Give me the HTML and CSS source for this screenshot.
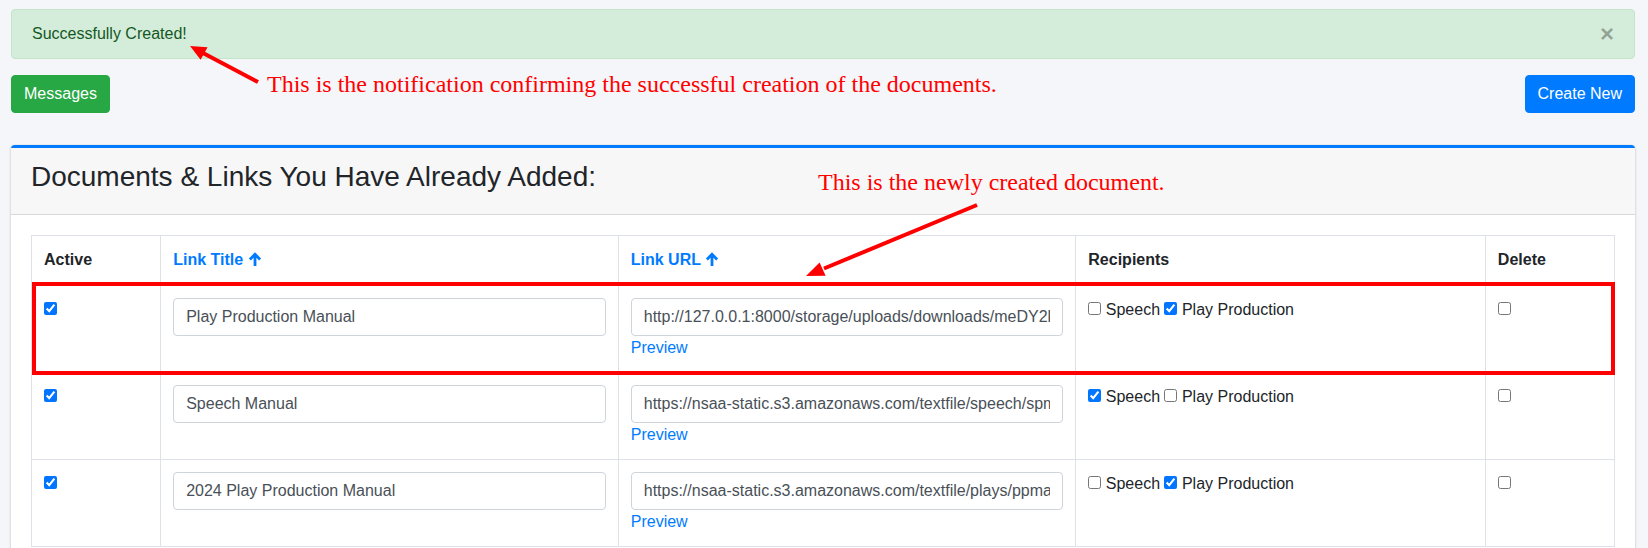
FILE: index.html
```html
<!DOCTYPE html>
<html lang="en">
<head>
<meta charset="utf-8">
<title>Documents &amp; Links</title>
<link rel="stylesheet" href="styles.css">
</head>
<body>
<div class="page">
  <div class="alert">
    Successfully Created!
    <button class="close" type="button">&times;</button>
  </div>

  <div class="toolbar">
    <button class="btn btn-success" type="button">Messages</button>
    <button class="btn btn-primary" type="button">Create New</button>
  </div>

  <div class="card">
    <div class="card-header">
      <h3 class="card-title">Documents &amp; Links You Have Already Added:</h3>
    </div>
    <div class="card-body">
      <table class="table">
        <colgroup>
          <col class="col-active">
          <col class="col-title">
          <col class="col-url">
          <col class="col-recipients">
          <col class="col-delete">
        </colgroup>
        <thead>
          <tr>
            <th>Active</th>
            <th><a class="sort" href="#">Link Title <svg class="sort-icon" viewBox="0 0 14 14" width="14" height="14"><path d="M7 14V2.4M1.9 7.4L7 2.3 12.1 7.4" fill="none" stroke="currentColor" stroke-width="2.8"/></svg></a></th>
            <th><a class="sort" href="#">Link URL <svg class="sort-icon" viewBox="0 0 14 14" width="14" height="14"><path d="M7 14V2.4M1.9 7.4L7 2.3 12.1 7.4" fill="none" stroke="currentColor" stroke-width="2.8"/></svg></a></th>
            <th>Recipients</th>
            <th>Delete</th>
          </tr>
        </thead>
        <tbody>
          <tr>
            <td><input type="checkbox" checked></td>
            <td><input class="form-control" type="text" value="Play Production Manual"></td>
            <td><input class="form-control" type="text" value="http://127.0.0.1:8000/storage/uploads/downloads/meDY2kP0aXq.pdf"><a class="preview" href="#">Preview</a></td>
            <td><input type="checkbox"> Speech <input type="checkbox" checked> Play Production</td>
            <td><input type="checkbox"></td>
          </tr>
          <tr>
            <td><input type="checkbox" checked></td>
            <td><input class="form-control" type="text" value="Speech Manual"></td>
            <td><input class="form-control" type="text" value="https://nsaa-static.s3.amazonaws.com/textfile/speech/spmanual.pdf"><a class="preview" href="#">Preview</a></td>
            <td><input type="checkbox" checked> Speech <input type="checkbox"> Play Production</td>
            <td><input type="checkbox"></td>
          </tr>
          <tr>
            <td><input type="checkbox" checked></td>
            <td><input class="form-control" type="text" value="2024 Play Production Manual"></td>
            <td><input class="form-control" type="text" value="https://nsaa-static.s3.amazonaws.com/textfile/plays/ppmanual.pdf"><a class="preview" href="#">Preview</a></td>
            <td><input type="checkbox"> Speech <input type="checkbox" checked> Play Production</td>
            <td><input type="checkbox"></td>
          </tr>
        </tbody>
      </table>
    </div>
  </div>

  <div class="annotations">
    <p class="note note-alert">This is the notification confirming the successful creation of the documents.</p>
    <p class="note note-row">This is the newly created document.</p>
    <svg class="marks" width="1648" height="548" viewBox="0 0 1648 548">
      <line x1="258" y1="82" x2="203" y2="53" stroke="#ff0000" stroke-width="4"/>
      <polygon points="190,46 207.6,47.2 200.6,59.8" fill="#ff0000"/>
      <line x1="977" y1="205" x2="824" y2="268.5" stroke="#ff0000" stroke-width="4"/>
      <polygon points="806,276 819.6,262.4 825.6,275.8" fill="#ff0000"/>
      <rect x="34" y="284" width="1579" height="89" fill="none" stroke="#ff0000" stroke-width="4"/>
    </svg>
  </div>
</div>
</body>
</html>
```

FILE: styles.css
```css
html, body {
  margin: 0;
  height: 100%;
  overflow: hidden;
}

body {
  background: #f4f6f9;
  font-family: "Liberation Sans", Arial, sans-serif;
  font-size: 16px;
  line-height: 1.5;
  color: #212529;
}

*, *::before, *::after {
  box-sizing: border-box;
}

.page {
  position: relative;
  padding: 9px 13px 0 11px;
  min-height: 100%;
}

/* Alert */
.alert {
  position: relative;
  padding: 12px 64px 12px 20px;
  margin-bottom: 16px;
  background: #d4edda;
  border: 1px solid #c3e6cb;
  border-radius: 4px;
  color: #155724;
}

.close {
  position: absolute;
  top: 0;
  right: 0;
  padding: 12px 20px;
  background: transparent;
  border: 0;
  font-family: inherit;
  font-size: 24px;
  font-weight: 700;
  line-height: 1;
  color: #000;
  opacity: .3;
  text-shadow: 0 1px 0 #fff;
}

/* Toolbar */
.toolbar {
  display: flex;
  justify-content: space-between;
  align-items: flex-start;
}

.btn {
  display: inline-block;
  padding: 6px 12px;
  font-family: inherit;
  font-size: 16px;
  line-height: 1.5;
  border: 1px solid transparent;
  border-radius: 4px;
  color: #fff;
}

.btn-success {
  background: #28a745;
  border-color: #28a745;
}

.btn-primary {
  background: #007bff;
  border-color: #007bff;
}

/* Card */
.card {
  margin-top: 32px;
  background: #fff;
  border-top: 3px solid #007bff;
  border-radius: 4px;
  box-shadow: 0 0 1px rgba(0, 0, 0, .125), 0 1px 3px rgba(0, 0, 0, .2);
}

.card-header {
  padding: 12px 20px;
  background: #f7f7f7;
  border-bottom: 1px solid rgba(0, 0, 0, .125);
}

.card-title {
  margin: 0 0 8px;
  font-size: 28px;
  font-weight: 500;
  line-height: 1.2;
  color: #212529;
}

.card-body {
  padding: 20px;
}

/* Table */
.table {
  width: 100%;
  border-collapse: collapse;
  table-layout: fixed;
  border: 1px solid #dee2e6;
}

.col-active { width: 129px; }
.col-title { width: 457px; }
.col-url { width: 457px; }
.col-recipients { width: 409px; }
.col-delete { width: 129px; }

.table th,
.table td {
  padding: 12px;
  border: 1px solid #dee2e6;
  vertical-align: top;
  text-align: left;
}

.table thead th {
  vertical-align: bottom;
  border-bottom-width: 2px;
  font-weight: 700;
}

.sort {
  color: #007bff;
  text-decoration: none;
}

.sort-icon {
  vertical-align: -1px;
}

.table input[type="checkbox"] {
  margin: 0;
}

.form-control {
  display: block;
  width: 100%;
  height: 38px;
  padding: 6px 12px;
  font-family: inherit;
  font-size: 16px;
  line-height: 1.5;
  color: #495057;
  background: #fff;
  border: 1px solid #ced4da;
  border-radius: 4px;
}

.preview {
  color: #007bff;
  text-decoration: none;
}

/* Annotation overlay */
.annotations {
  position: absolute;
  top: 0;
  left: 0;
  width: 1648px;
  height: 548px;
  pointer-events: none;
}

.note {
  position: absolute;
  margin: 0;
  font-family: "Liberation Serif", "Times New Roman", serif;
  font-size: 24px;
  line-height: 24px;
  color: #ff0000;
  white-space: nowrap;
}

.note-alert {
  left: 267px;
  top: 72px;
}

.note-row {
  left: 818px;
  top: 170px;
}

.marks {
  position: absolute;
  top: 0;
  left: 0;
}
```
